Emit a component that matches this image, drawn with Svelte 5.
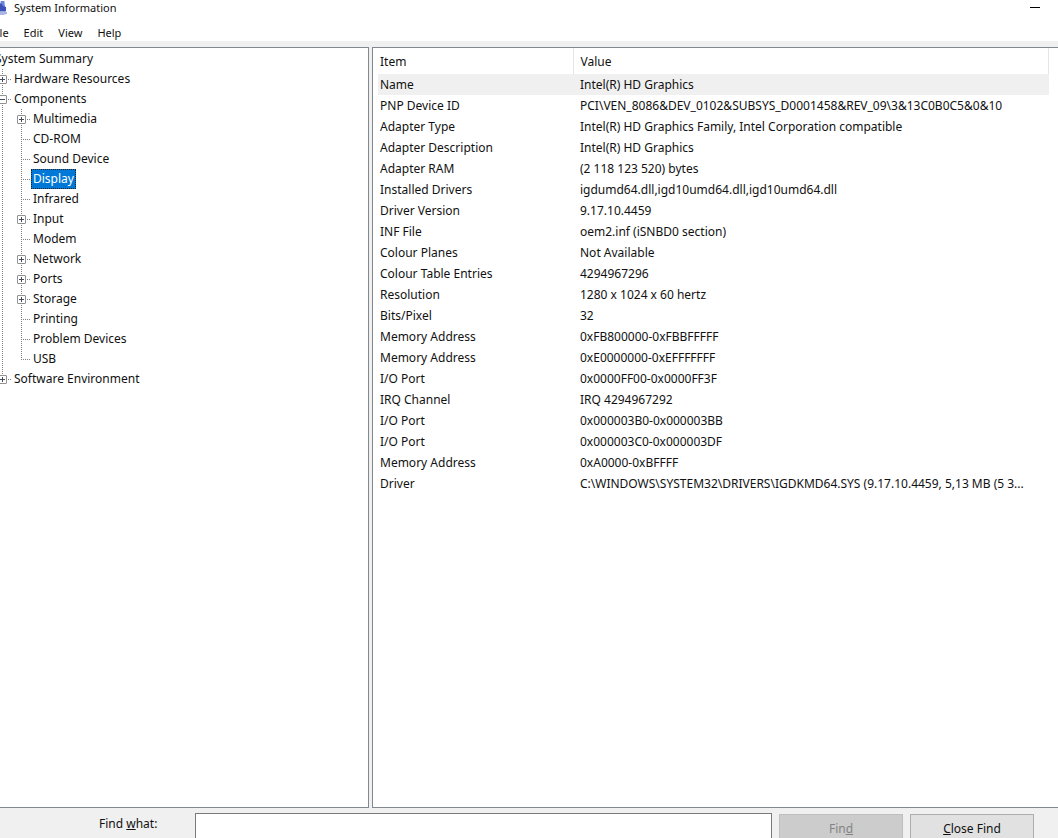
<script lang="ts">
  type TreeNode = {
    label: string;
    expandable?: boolean;
    open?: boolean;
    children?: TreeNode[];
  };

  const menus = ["File", "Edit", "View", "Help"];

  let tree: TreeNode = $state({
    label: "System Summary",
    open: true,
    children: [
      { label: "Hardware Resources", expandable: true },
      {
        label: "Components",
        expandable: true,
        open: true,
        children: [
          { label: "Multimedia", expandable: true },
          { label: "CD-ROM" },
          { label: "Sound Device" },
          { label: "Display" },
          { label: "Infrared" },
          { label: "Input", expandable: true },
          { label: "Modem" },
          { label: "Network", expandable: true },
          { label: "Ports", expandable: true },
          { label: "Storage", expandable: true },
          { label: "Printing" },
          { label: "Problem Devices" },
          { label: "USB" }
        ]
      },
      { label: "Software Environment", expandable: true }
    ]
  });

  const rows = [
    ["Name", "Intel(R) HD Graphics"],
    ["PNP Device ID", "PCI\\VEN_8086&DEV_0102&SUBSYS_D0001458&REV_09\\3&13C0B0C5&0&10"],
    ["Adapter Type", "Intel(R) HD Graphics Family, Intel Corporation compatible"],
    ["Adapter Description", "Intel(R) HD Graphics"],
    ["Adapter RAM", "(2 118 123 520) bytes"],
    ["Installed Drivers", "igdumd64.dll,igd10umd64.dll,igd10umd64.dll"],
    ["Driver Version", "9.17.10.4459"],
    ["INF File", "oem2.inf (iSNBD0 section)"],
    ["Colour Planes", "Not Available"],
    ["Colour Table Entries", "4294967296"],
    ["Resolution", "1280 x 1024 x 60 hertz"],
    ["Bits/Pixel", "32"],
    ["Memory Address", "0xFB800000-0xFBBFFFFF"],
    ["Memory Address", "0xE0000000-0xEFFFFFFF"],
    ["I/O Port", "0x0000FF00-0x0000FF3F"],
    ["IRQ Channel", "IRQ 4294967292"],
    ["I/O Port", "0x000003B0-0x000003BB"],
    ["I/O Port", "0x000003C0-0x000003DF"],
    ["Memory Address", "0xA0000-0xBFFFF"],
    ["Driver", "C:\\WINDOWS\\SYSTEM32\\DRIVERS\\IGDKMD64.SYS (9.17.10.4459, 5,13 MB (5 3..."]
  ];

  let selected = $state("Display");
  let selectedRow = $state(0);
  let query = $state("");
</script>

{#snippet branch(node: TreeNode)}
  <li>
    <div class="node">
      <span class="gutter">
        {#if node.expandable}
          <button
            class="toggle"
            class:open={node.open}
            aria-label={(node.open ? "Collapse " : "Expand ") + node.label}
            onclick={() => (node.open = !node.open)}
          ></button>
        {/if}
      </span>
      <button class="label" class:selected={selected === node.label} onclick={() => (selected = node.label)}>
        {node.label}
      </button>
    </div>
    {#if node.open && node.children}
      <ul>
        {#each node.children as child}
          {@render branch(child)}
        {/each}
      </ul>
    {/if}
  </li>
{/snippet}

<div class="window">
  <header class="titlebar">
    <svg class="app_icon" width="16" height="16" viewBox="0 0 16 16" aria-hidden="true">
      <path d="M3 1h11v8H3z" fill="#c6d0f0" />
      <path d="M10 1l3 0 1 6-4 1z" fill="#6e86dc" />
      <path d="M7 5l3-2 2 3 3 1v4l-3 2H6z" fill="#3c52b8" />
      <path d="M2 12l10-1 4 1v2l-4 1H4z" fill="#a9b6e4" />
    </svg>
    <span class="title">System Information</span>
    <button class="minimize" aria-label="Minimize"></button>
  </header>

  <nav class="menubar">
    {#each menus as menu}
      <button>{menu}</button>
    {/each}
  </nav>

  <main class="panes">
    <section class="tree_pane">
      <ul class="tree">
        {#each [tree] as root}
          {@render branch(root)}
        {/each}
      </ul>
    </section>

    <section class="list_pane">
      <table>
        <thead>
          <tr><th class="item">Item</th><th>Value</th></tr>
        </thead>
        <tbody>
          {#each rows as [item, value], i}
            <tr class:current={selectedRow === i} onclick={() => (selectedRow = i)}>
              <td>{item}</td>
              <td>{value}</td>
            </tr>
          {/each}
        </tbody>
      </table>
    </section>
  </main>

  <form class="findbar" onsubmit={(e) => e.preventDefault()}>
    <label for="find">Find <u>w</u>hat:</label>
    <input id="find" type="text" bind:value={query} />
    <button type="submit" disabled={!query}>Fin<u>d</u></button>
    <button type="button"><u>C</u>lose Find</button>
  </form>
</div>

<style>
  :global(body) {
    overflow: hidden;
    background: #f0f0f0;
  }

  /* the window hangs over the left and bottom edge of the screen */
  .window {
    display: flex;
    flex-direction: column;
    height: calc(100vh + 7px);
    margin-left: -20px;
    font-family: "Noto Sans", "Segoe UI", sans-serif;
    font-size: 12px;
    color: #111;
    background: #f0f0f0;
  }

  button {
    padding: 0;
    border: none;
    background: none;
    font: inherit;
    color: inherit;
  }

  .titlebar {
    display: flex;
    align-items: center;
    height: 15px;
    padding: 0 18px 9px 11px;
    background: #fff;
    font-size: 11px;
  }

  .title {
    flex: 1;
    margin-left: 7px;
  }

  .minimize {
    width: 10px;
    height: 1px;
    background: #000;
  }

  .menubar {
    display: flex;
    align-items: center;
    gap: 15px;
    height: 17px;
    padding: 0 11px;
    background: #fff;
    font-size: 11px;
  }

  .panes {
    display: flex;
    flex: 1;
    gap: 3px;
    min-height: 0;
    margin-top: 6px;
  }

  .tree_pane {
    box-sizing: border-box;
    width: 389px;
    padding: 1px 0 0 12px;
    border: 1px solid #828790;
    background: #fff;
  }

  ul {
    margin: 0;
    padding: 0;
    list-style: none;
  }

  li li {
    background: repeating-linear-gradient(#808080 0 1px, transparent 1px 2px) 9px 0 / 1px 100% no-repeat;
  }

  li li:last-child {
    background-size: 1px 10px;
  }

  li li li {
    margin-left: 19px;
  }

  .node {
    display: flex;
    align-items: center;
    height: 20px;
  }

  li li .node {
    background: repeating-linear-gradient(90deg, #808080 0 1px, transparent 1px 2px) 9px 10px / 9px 1px no-repeat;
  }

  .gutter {
    display: none;
  }

  li li .gutter {
    display: flex;
    width: 19px;
    padding-left: 5px;
    box-sizing: border-box;
  }

  .toggle {
    width: 9px;
    height: 9px;
    border: 1px solid #919191;
    border-radius: 1px;
    background:
      linear-gradient(#444c60, #444c60) center / 5px 1px no-repeat,
      linear-gradient(#444c60, #444c60) center / 1px 5px no-repeat,
      #fff;
  }

  .toggle.open {
    background:
      linear-gradient(#444c60, #444c60) center / 5px 1px no-repeat,
      #fff;
  }

  .label {
    height: 20px;
    padding: 0 1px;
    border: 1px solid transparent;
    line-height: 18px;
    white-space: nowrap;
  }

  .label.selected {
    border: 1px dotted #222;
    background: #0078d7;
    color: #fff;
  }

  .list_pane {
    flex: 1;
    min-width: 0;
    padding: 0 9px 0 5px;
    border: 1px solid #828790;
    border-right: none;
    background: #fff;
  }

  table {
    width: 100%;
    border-collapse: collapse;
    table-layout: fixed;
  }

  th {
    height: 26px;
    padding: 0 7px;
    box-sizing: border-box;
    border-right: 1px solid #e5e5e5;
    font-weight: normal;
    text-align: left;
  }

  .item {
    width: 195px;
  }

  td {
    height: 21px;
    padding: 0 7px;
    line-height: 20px;
    white-space: nowrap;
  }

  th:first-child,
  td:first-child {
    padding-left: 2px;
  }

  .current {
    background: #f0f0f0;
  }

  .findbar {
    display: flex;
    align-items: flex-start;
    height: 37px;
    padding: 5px 24px 0 0;
    box-sizing: border-box;
  }

  .findbar label {
    width: 215px;
    padding: 2px 0 0 119px;
    box-sizing: border-box;
    line-height: 18px;
  }

  .findbar input {
    flex: 1;
    min-width: 0;
    height: 28px;
    box-sizing: border-box;
    border: 1px solid #7a7a7a;
    background: #fff;
    font: inherit;
  }

  .findbar button {
    width: 124px;
    height: 28px;
    margin: 1px 0 0 7px;
    border: 1px solid #adadad;
    background: #e1e1e1;
  }

  .findbar button:disabled {
    border-color: #bfbfbf;
    background: #ccc;
    color: #838383;
  }
</style>
